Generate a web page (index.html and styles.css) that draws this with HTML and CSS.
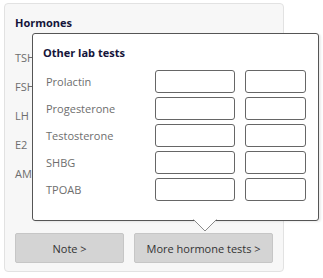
FILE: index.html
```html
<!DOCTYPE html>
<html lang="en">
<head>
    <meta charset="UTF-8">
    <title>Hormones</title>
    <link rel="stylesheet" href="styles.css">
</head>
<body>

<div class="card">
    <h2 class="card-title">Hormones</h2>
    <div class="label-list">
        <div class="label">TSH</div>
        <div class="label">FSH</div>
        <div class="label">LH</div>
        <div class="label">E2</div>
        <div class="label">AMH</div>
    </div>
    <div class="button-row">
        <button class="btn btn-note">Note &gt;</button>
        <button class="btn btn-more">More hormone tests &gt;</button>
    </div>

    <div class="popup">
        <h3 class="popup-title">Other lab tests</h3>
        <div class="test-row">
            <span class="test-name">Prolactin</span>
            <input type="text" class="field field-value">
            <input type="text" class="field field-unit">
        </div>
        <div class="test-row">
            <span class="test-name">Progesterone</span>
            <input type="text" class="field field-value">
            <input type="text" class="field field-unit">
        </div>
        <div class="test-row">
            <span class="test-name">Testosterone</span>
            <input type="text" class="field field-value">
            <input type="text" class="field field-unit">
        </div>
        <div class="test-row">
            <span class="test-name">SHBG</span>
            <input type="text" class="field field-value">
            <input type="text" class="field field-unit">
        </div>
        <div class="test-row">
            <span class="test-name">TPOAB</span>
            <input type="text" class="field field-value">
            <input type="text" class="field field-unit">
        </div>
        <svg class="popup-arrow" width="24" height="13" viewBox="0 0 24 13">
            <polygon points="0,0 12,12 24,0" fill="#fff"/>
            <polyline points="0.5,0.5 12,12 23.5,0.5" fill="none" stroke="#8a8a8a" stroke-width="1"/>
        </svg>
    </div>
</div>

</body>
</html>
```
FILE: styles.css
```css
body {
    font-family: "Open Sans", Arial, sans-serif;
    font-size: 11px;
    background-color: #fff;
    margin: 0;
    padding: 3px 4px;
}
.card {
    position: relative;
    width: 258px;
    height: 258px;
    background-color: #f7f7f7;
    border: 1px solid #e2e2e2;
    border-radius: 4px;
    padding: 9px 10px 0 10px;
    display: flex;
    flex-direction: column;
}
.card-title {
    margin: 0;
    font-size: 11px;
    font-weight: bold;
    color: #14143a;
    line-height: 20px;
}
.label-list {
    margin-top: 16px;
    display: flex;
    flex-direction: column;
    gap: 11px;
}
.label {
    color: #6e6e6e;
    line-height: 18px;
}
.button-row {
    margin-top: auto;
    margin-bottom: 8px;
    display: flex;
    gap: 10px;
}
.btn {
    font-family: "Open Sans", Arial, sans-serif;
    font-size: 11px;
    color: #333;
    background-color: #d4d4d4;
    border: 1px solid #c6c6c6;
    border-radius: 2px;
    height: 30px;
    padding: 0;
    cursor: pointer;
}
.btn-note {
    width: 110px;
}
.btn-more {
    width: 140px;
}
.popup {
    position: absolute;
    left: 27px;
    top: 29px;
    width: 287px;
    height: 188px;
    background-color: #fff;
    border: 1px solid #555;
    border-radius: 3px;
    box-shadow: 2px 1px 2px rgba(0, 0, 0, 0.08);
    box-sizing: border-box;
    padding: 10px 0 0 10px;
}
.popup-title {
    margin: 0 0 8px 0;
    font-size: 11px;
    font-weight: bold;
    color: #14143a;
    line-height: 18px;
}
.test-row {
    display: flex;
    align-items: center;
    height: 23px;
    margin-bottom: 4px;
}
.test-name {
    width: 109px;
    padding-left: 3px;
    color: #6e6e6e;
}
.field {
    height: 23px;
    box-sizing: border-box;
    border: 1px solid #666;
    border-radius: 3px;
    padding: 0;
}
.field-value {
    width: 80px;
}
.field-unit {
    width: 61px;
    margin-left: 10px;
}
.popup-arrow {
    position: absolute;
    left: 160px;
    top: 100%;
    margin-top: -1px;
    display: block;
}
```
